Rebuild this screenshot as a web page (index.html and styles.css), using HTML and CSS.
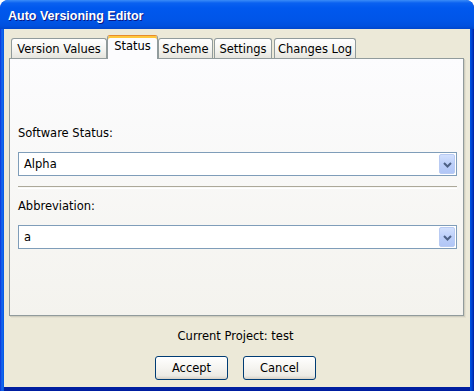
FILE: index.html
```html
<!DOCTYPE html>
<html>
<head>
<meta charset="utf-8">
<link rel="stylesheet" href="styles.css">
</head>
<body>
<div class="window">
  <div class="titlebar"><span class="title">Auto Versioning Editor</span></div>
  <div class="client">
    <div class="tabs">
      <div class="tab tab-vv">Version Values</div>
      <div class="tab active tab-status">Status</div>
      <div class="tab tab-scheme">Scheme</div>
      <div class="tab tab-settings">Settings</div>
      <div class="tab tab-log">Changes Log</div>
    </div>
    <div class="panel">
      <div class="label first">Software Status:</div>
      <div class="combo">
        <span class="combo-text">Alpha</span>
        <span class="combo-btn"><svg width="9" height="6" viewBox="0 0 9 6"><polyline points="1,1 4.5,4.5 8,1" fill="none" stroke="#4D6185" stroke-width="2"/></svg></span>
      </div>
      <div class="separator"></div>
      <div class="label">Abbreviation:</div>
      <div class="combo">
        <span class="combo-text">a</span>
        <span class="combo-btn"><svg width="9" height="6" viewBox="0 0 9 6"><polyline points="1,1 4.5,4.5 8,1" fill="none" stroke="#4D6185" stroke-width="2"/></svg></span>
      </div>
    </div>
    <div class="project">Current Project: test</div>
    <div class="buttons">
      <button class="btn">Accept</button>
      <button class="btn">Cancel</button>
    </div>
  </div>
</div>
</body>
</html>
```
FILE: styles.css
```css
html, body {
  margin: 0;
  padding: 0;
  background: #ffffff;
}
body {
  font-family: "DejaVu Sans", Verdana, sans-serif;
  font-size: 11.5px;
  color: #000;
}
.window {
  width: 474px;
  height: 391px;
  box-sizing: border-box;
  display: flex;
  flex-direction: column;
  border-radius: 8px 8px 0 0;
  background: linear-gradient(to right, #0831D9 0px, #166AEE 2px, #0055E5 4px, #0055E5 470px, #0040D0 472px, #001EA0 474px);
  overflow: hidden;
}
.titlebar {
  height: 29px;
  flex: none;
  display: flex;
  align-items: center;
  padding-left: 8px;
  background: linear-gradient(to bottom, #3A8CF8 0px, #0A61F0 3px, #0058EE 8px, #0055E8 20px, #0050DE 26px, #0046CC 29px);
  border-radius: 8px 8px 0 0;
}
.title {
  font-family: "Liberation Sans", Arial, sans-serif;
  font-weight: bold;
  font-size: 12.5px;
  color: #ffffff;
  text-shadow: 1px 1px 0 #0A1883;
  margin-top: 2px;
}
.client {
  flex: 1;
  margin: 0 4px 4px 4px;
  background: #ECE9D8;
  display: flex;
  flex-direction: column;
  padding: 6px 6px 0 5px;
  box-shadow: 0 4px 0 #001EA0;
}
.tabs {
  display: flex;
  align-items: flex-end;
  height: 23px;
  padding-left: 2px;
  position: relative;
  z-index: 1;
}
.tab {
  box-sizing: border-box;
  height: 20px;
  border: 1px solid #919B9C;
  border-bottom: none;
  border-radius: 3px 3px 0 0;
  background: linear-gradient(to bottom, #FFFFFF, #F3F3EF 60%, #E6E5DE);
  padding: 3px 0 0 0;
  text-align: center;
  line-height: 14px;
  white-space: nowrap;
}
.tab-vv { width: 96px; }
.tab-status { width: 51px; }
.tab-scheme { width: 55px; }
.tab-settings { width: 58px; margin-left: 1px; }
.tab-log { width: 82px; margin-left: 2px; }
.tab.active {
  height: 24px;
  margin-bottom: -1px;
  background: #FCFCFE;
  border-top: 1px solid #E68B2C;
  box-shadow: inset 0 2px 0 #FFC73C;
  padding-top: 3px;
}
.panel {
  box-sizing: border-box;
  height: 258px;
  border: 1px solid #919B9C;
  background: linear-gradient(to bottom, #FCFCFE, #F4F3EE);
  box-shadow: 1px 1px 0 #D0CEBF, 2px 2px 0 #E3E0D0;
  padding: 0 6px 0 8px;
  display: flex;
  flex-direction: column;
  width: 455px;
}
.label {
  line-height: 14px;
  height: 14px;
  margin-top: 10px;
}
.label.first {
  margin-top: 67px;
}
.combo {
  margin-top: 12px;
  height: 24px;
  box-sizing: border-box;
  border: 1px solid #7F9DB9;
  background: #ffffff;
  display: flex;
  align-items: center;
  justify-content: space-between;
}
.combo-text {
  padding-left: 5px;
  line-height: 14px;
}
.combo-btn {
  box-sizing: border-box;
  width: 16px;
  height: 20px;
  margin-right: 1px;
  border: 1px solid #B9CBF3;
  border-radius: 2px;
  background: linear-gradient(to bottom, #D2E0FD, #BCCFF9 50%, #B1C6F6);
  display: flex;
  align-items: center;
  justify-content: center;
}
.combo-btn svg {
  display: block;
  margin-top: 1px;
}
.separator {
  margin-top: 10px;
  height: 1px;
  border-top: 1px solid #ACA899;
  border-bottom: 1px solid #FFFFFF;
}
.project {
  text-align: center;
  margin-top: 13px;
  line-height: 14px;
  padding-right: 2px;
}
.buttons {
  display: flex;
  justify-content: center;
  gap: 15px;
  margin-top: 13px;
  padding-right: 2px;
}
.btn {
  box-sizing: border-box;
  width: 73px;
  height: 24px;
  border: 1px solid #003C74;
  border-radius: 3px;
  background: linear-gradient(to bottom, #FFFFFF, #F5F4F0 50%, #ECEBE5 85%, #D6D0C5);
  font-family: "DejaVu Sans", Verdana, sans-serif;
  font-size: 11.5px;
  color: #000;
  padding: 0;
}
```
